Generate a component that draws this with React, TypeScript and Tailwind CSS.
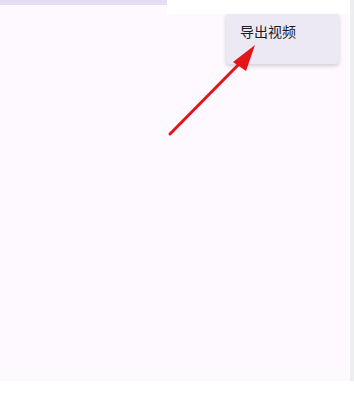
export default function App() {
  return (
    <div
      className="relative w-[354px] h-[402px] bg-white overflow-hidden"
      style={{ fontFamily: '"Noto Sans CJK SC", "Noto Sans", sans-serif' }}
    >
      <div className="flex h-[381px]">
        <div className="flex-1 bg-[#fdf9fe] flex flex-col">
          <div className="flex">
            <div className="w-[167px] h-[5px] bg-[#e4def5]" />
            <div className="flex-1 h-[14px] bg-white" />
          </div>
        </div>
        <div className="w-[4px] bg-[#eceef0]" />
      </div>

      {/* popup menu */}
      <div className="absolute left-[226px] top-[14px] w-[113px] h-[50px] bg-[#ede9f4] rounded-b-[4px] shadow-[0_2px_4px_rgba(0,0,0,0.18)] pl-[14px] pt-[4px]">
        <span className="text-[14px] leading-[20px] text-[#1c1b1f]">导出视频</span>
      </div>

      {/* annotation arrow */}
      <svg className="absolute left-0 top-0" width="354" height="402" viewBox="0 0 354 402">
        <line x1="170" y1="134" x2="243" y2="60" stroke="#e31519" strokeWidth="3" strokeLinecap="round" />
        <polygon points="255,45 233,62 246,71" fill="#e31519" />
      </svg>
    </div>
  );
}
